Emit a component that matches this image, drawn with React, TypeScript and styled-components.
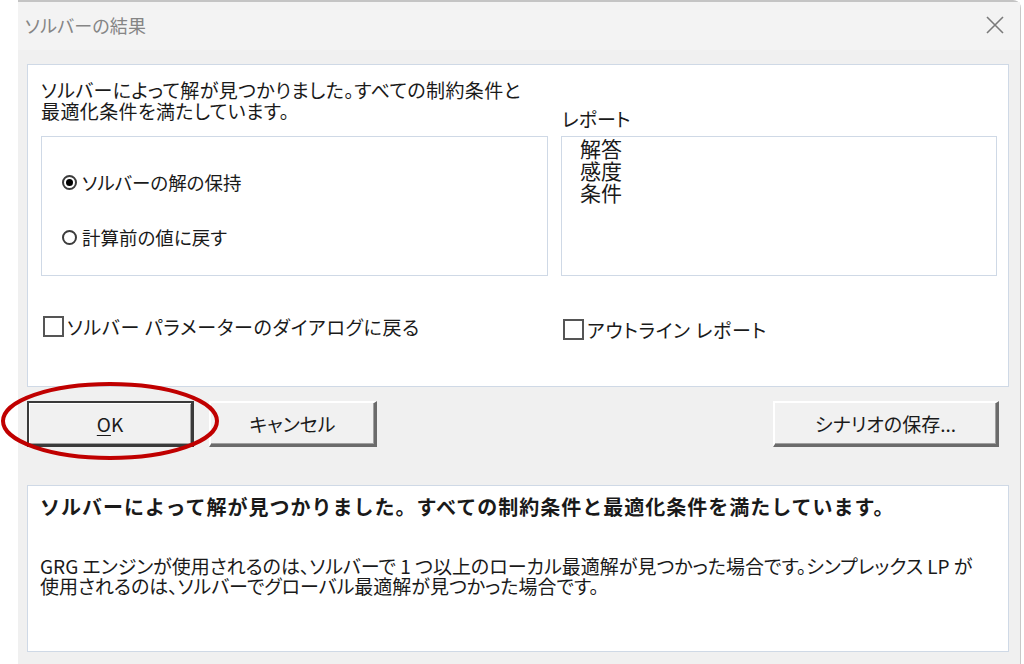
import React from "react";
import styled, { createGlobalStyle } from "styled-components";

const GlobalStyle = createGlobalStyle`
  html, body {
    margin: 0;
    padding: 0;
    background: #ffffff;
    width: 1024px;
    height: 664px;
    overflow: hidden;
  }
  * { box-sizing: border-box; }
  body {
    font-family: "Noto Sans CJK JP", "Noto Sans", sans-serif;
    color: #1a1a1a;
  }
`;

const Page = styled.div`
  position: relative;
  width: 1024px;
  height: 664px;
  display: flex;
  padding-left: 18px;
`;

const Window = styled.div`
  width: 1003px;
  height: 664px;
  background: #f0f0f0;
  border-top: 2px solid #c4c4c4;
  border-right: 1px solid #c8c8c8;
  border-top-right-radius: 8px;
  display: flex;
  flex-direction: column;
`;

const TitleBar = styled.div`
  height: 48px;
  background: #f3f3f3;
  display: flex;
  align-items: center;
  justify-content: space-between;
  padding: 0 14px 0 7px;
`;

const TitleText = styled.div`
  font-size: 18px;
  color: #858585;
  font-feature-settings: "palt";
  letter-spacing: 0.2px;
  margin-top: -2px;
`;

const CloseButton = styled.div`
  width: 22px;
  height: 22px;
  display: flex;
  align-items: center;
  justify-content: center;
  margin-top: -2px;
`;

const Body = styled.div`
  display: flex;
  flex-direction: column;
  padding: 14px 11px 0 9px;
`;

const Panel = styled.div`
  background: #ffffff;
  border: 1px solid #cfd9e6;
`;

const TopPanel = styled(Panel)`
  height: 323px;
  display: grid;
  grid-template-columns: 507px 436px;
  grid-template-rows: 57px 140px auto;
  column-gap: 13px;
  padding: 14px 0 0 13px;
`;

const IntroText = styled.div`
  font-size: 19px;
  line-height: 21px;
  font-feature-settings: "palt";
  letter-spacing: 0.4px;
  white-space: pre-line;
`;

const ReportLabel = styled.div`
  align-self: end;
  font-size: 19px;
  line-height: 22px;
  margin: 0 0 6px 1px;
  font-feature-settings: "palt";
`;

const GroupBox = styled.div`
  border: 1px solid #cfd9e6;
  background: #ffffff;
`;

const RadioGroup = styled(GroupBox)`
  display: flex;
  flex-direction: column;
  gap: 33px;
  padding: 34px 0 0 20px;
`;

const RadioRow = styled.label`
  display: flex;
  align-items: center;
  gap: 5px;
  font-size: 18.5px;
  line-height: 22px;
  font-feature-settings: "palt";
`;

const RadioCircle = styled.span<{ $checked?: boolean }>`
  width: 15px;
  height: 15px;
  border-radius: 50%;
  border: 2px solid #3c3c3c;
  background: #fff;
  display: inline-flex;
  align-items: center;
  justify-content: center;
  flex: none;
  &::after {
    content: "";
    width: 7px;
    height: 7px;
    border-radius: 50%;
    background: ${(p) => (p.$checked ? "#000" : "transparent")};
  }
`;

const ReportList = styled(GroupBox)`
  padding: 0 0 0 18px;
  font-size: 21px;
  line-height: 22px;
`;

const CheckRow = styled.label<{ $top: number }>`
  display: flex;
  align-items: center;
  gap: 3px;
  margin: ${(p) => p.$top}px 0 0 2px;
  height: 22px;
  font-size: 19px;
  font-feature-settings: "palt";
  letter-spacing: 0.7px;
`;

const CheckBox = styled.span`
  width: 21px;
  height: 21px;
  border: 2px solid #555555;
  background: #fff;
  flex: none;
`;

const ButtonRow = styled.div`
  display: flex;
  gap: 15px;
  margin-top: 14px;
  padding-right: 10px;
`;

const Button = styled.div<{ $w: number; $default?: boolean }>`
  width: ${(p) => p.$w}px;
  height: 46px;
  background: #f1f1f1;
  display: flex;
  align-items: center;
  justify-content: center;
  font-size: 19px;
  font-feature-settings: "palt";
  color: #1a1a1a;
  border-style: solid;
  border-width: 2px 3px 3px 2px;
  border-color: ${(p) =>
    p.$default
      ? "#3a3a3a"
      : "#ffffff #6b6b6b #6b6b6b #ffffff"};
  box-shadow: ${(p) =>
    p.$default
      ? "inset 1px 1px 0 #ffffff, inset -1px -1px 0 #a0a0a0"
      : "inset -1px -1px 0 #a0a0a0"};
`;

const Spacer = styled.div`
  flex: 1;
`;

const Underline = styled.span`
  text-decoration: underline;
  text-underline-offset: 3px;
  text-decoration-thickness: 1px;
`;

const BottomPanel = styled(Panel)`
  margin-top: 38px;
  height: 167px;
  padding: 8px 0 0 12px;
`;

const BoldMessage = styled.div`
  font-size: 20px;
  line-height: 26px;
  font-weight: 700;
  letter-spacing: 1px;
`;

const Description = styled.div`
  margin-top: 36px;
  font-size: 19px;
  line-height: 20px;
  font-feature-settings: "palt";
  white-space: pre-line;
`;

const Annotation = styled.svg`
  position: absolute;
  left: 0;
  top: 380px;
  pointer-events: none;
`;

export default function App() {
  return (
    <>
      <GlobalStyle />
      <Page>
        <Window>
          <TitleBar>
            <TitleText>ソルバーの結果</TitleText>
            <CloseButton>
              <svg width="20" height="20" viewBox="0 0 20 20">
                <path d="M2 2 L18 18 M18 2 L2 18" stroke="#7a7a7a" strokeWidth="1.6" fill="none" />
              </svg>
            </CloseButton>
          </TitleBar>
          <Body>
            <TopPanel>
              <IntroText>
                {"ソルバーによって解が見つかりました。すべての制約条件と\n最適化条件を満たしています。"}
              </IntroText>
              <ReportLabel>レポート</ReportLabel>
              <RadioGroup>
                <RadioRow>
                  <RadioCircle $checked />
                  ソルバーの解の保持
                </RadioRow>
                <RadioRow>
                  <RadioCircle />
                  計算前の値に戻す
                </RadioRow>
              </RadioGroup>
              <ReportList>
                <div>解答</div>
                <div>感度</div>
                <div>条件</div>
              </ReportList>
              <CheckRow $top={39}>
                <CheckBox />
                ソルバー パラメーターのダイアログに戻る
              </CheckRow>
              <CheckRow $top={42}>
                <CheckBox />
                アウトライン レポート
              </CheckRow>
            </TopPanel>
            <ButtonRow>
              <Button $w={167} $default>
                <Underline>O</Underline>K
              </Button>
              <Button $w={168}>キャンセル</Button>
              <Spacer />
              <Button $w={226}>シナリオの保存...</Button>
            </ButtonRow>
            <BottomPanel>
              <BoldMessage>
                ソルバーによって解が見つかりました。すべての制約条件と最適化条件を満たしています。
              </BoldMessage>
              <Description>
                {"GRG エンジンが使用されるのは、ソルバーで 1 つ以上のローカル最適解が見つかった場合です。シンプレックス LP が\n使用されるのは、ソルバーでグローバル最適解が見つかった場合です。"}
              </Description>
            </BottomPanel>
          </Body>
        </Window>
        <Annotation width="224" height="84" viewBox="0 0 224 84">
          <ellipse cx="110" cy="41" rx="107" ry="37" fill="none" stroke="#c00000" strokeWidth="4" />
        </Annotation>
      </Page>
    </>
  );
}
